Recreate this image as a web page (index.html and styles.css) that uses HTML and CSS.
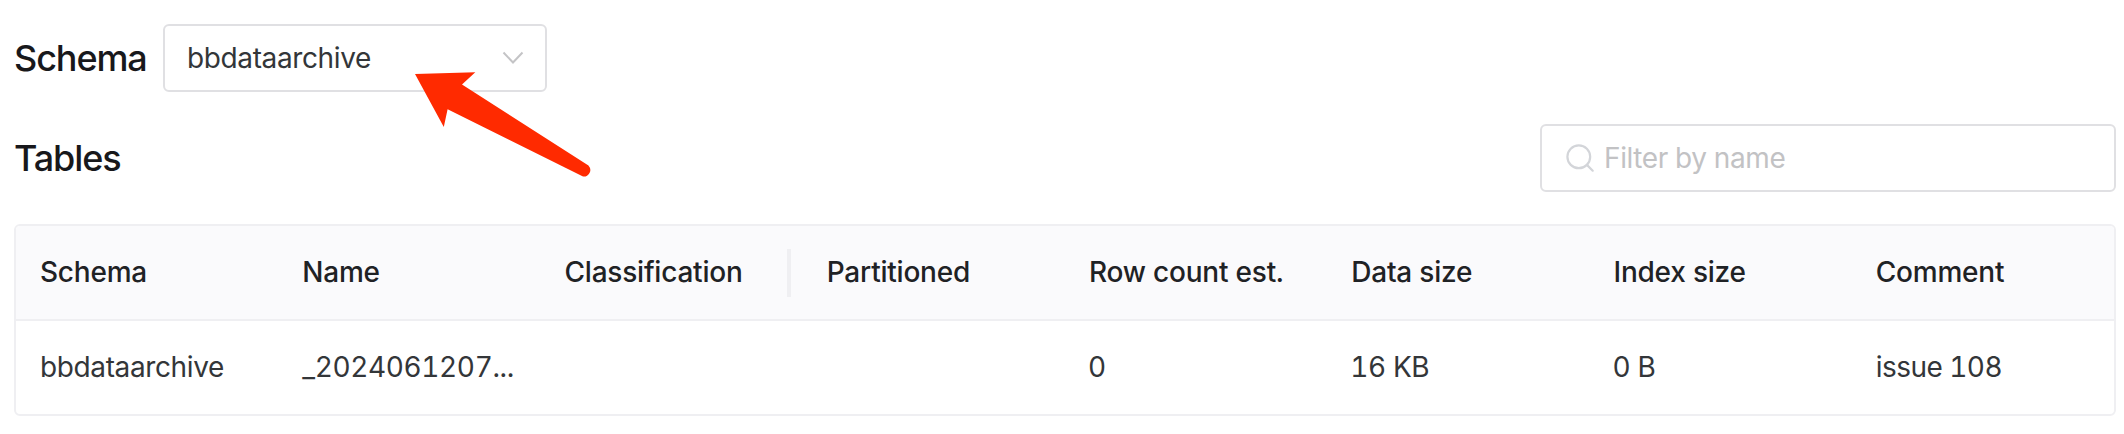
FILE: index.html
```html
<!DOCTYPE html>
<html lang="en">
<head>
<meta charset="utf-8">
<title>Schema tables</title>
<link rel="stylesheet" href="styles.css">
</head>
<body>
<main class="page">
  <div class="schema-bar">
    <h2 class="heading heading-schema">Schema</h2>
    <div class="select">
      <span class="select-value">bbdataarchive</span>
      <svg class="chevron" width="22" height="14" viewBox="0 0 22 14" fill="none"><path d="M1.5 1.5 11 11.5 20.5 1.5" stroke="#c4c4c6" stroke-width="2"/></svg>
    </div>
  </div>
  <div class="tables-bar">
    <h2 class="heading heading-tables">Tables</h2>
    <label class="search">
      <svg class="search-icon" width="28" height="28" viewBox="0 0 28 28" fill="none" stroke="#d3d5d9" stroke-width="2.2" stroke-linecap="round"><circle cx="12.8" cy="12.8" r="11.4"/><path d="m20.9 20.9 5.8 5.8"/></svg>
      <span class="placeholder">Filter by name</span>
    </label>
  </div>
  <section class="table">
    <div class="row head">
      <div class="cell">Schema</div>
      <div class="cell">Name</div>
      <div class="cell cell-resizable">Classification</div>
      <div class="cell">Partitioned</div>
      <div class="cell">Row count est.</div>
      <div class="cell">Data size</div>
      <div class="cell">Index size</div>
      <div class="cell">Comment</div>
    </div>
    <div class="row body">
      <div class="cell">bbdataarchive</div>
      <div class="cell cell-name">_2024061207...</div>
      <div class="cell"></div>
      <div class="cell"></div>
      <div class="cell cell-number">0</div>
      <div class="cell cell-number">16 KB</div>
      <div class="cell cell-number">0 B</div>
      <div class="cell cell-comment">issue 108</div>
    </div>
  </section>
  <svg class="arrow" width="180" height="110" viewBox="412 70 180 110"><path d="M415 74 475.3 72.2 462 84.6 586.5 164.2A6.4 6.4 0 0 1 582.5 176.3L447.6 109.2 443.8 127Z" fill="#ff2a00"/></svg>
</main>
</body>
</html>
```
FILE: styles.css
```css
* { box-sizing: border-box; }
body {
  margin: 0;
  background: #fff;
  color: #333639;
  font-family: Inter, "Liberation Sans", sans-serif;
  font-size: 28px;
  line-height: 44px;
  letter-spacing: -0.38px;
  font-variant-numeric: tabular-nums;
}
.page {
  position: relative;
  height: 434px;
  padding: 24px 8px 0 14px;
}
.schema-bar { display: flex; align-items: center; height: 68px; }
.heading {
  margin: 0;
  color: #18181b;
  font-size: 36px;
  font-weight: 500;
  line-height: 56px;
  letter-spacing: -1.1px;
}
.heading-schema { width: 149px; }
.select {
  display: flex;
  align-items: center;
  justify-content: space-between;
  width: 384px;
  height: 68px;
  padding: 0 21px 0 22px;
  border: 2px solid #e0e0e3;
  border-radius: 6px;
}
.tables-bar {
  display: flex;
  align-items: center;
  justify-content: space-between;
  height: 68px;
  margin-top: 32px;
}
.search {
  display: flex;
  align-items: center;
  gap: 10px;
  width: 576px;
  height: 68px;
  padding: 0 24px;
  border: 2px solid #e0e0e3;
  border-radius: 6px;
}
.placeholder { color: #c2c2c4; }
.table {
  height: 192px;
  margin-top: 32px;
  border: 2px solid #efeff2;
  border-radius: 6px;
  overflow: hidden;
}
.row { display: grid; grid-template-columns: repeat(8, 1fr); }
.cell { padding: 0 24px; white-space: nowrap; }
.head {
  height: 95px;
  padding: 24px 0;
  border-bottom: 2px solid #efeff2;
  background: #fafafc;
  color: #1f2225;
  font-weight: 500;
  letter-spacing: -0.22px;
}
.body { padding-top: 24px; }
.cell-number { padding-left: 23px; letter-spacing: -0.4px; }
.cell-comment { letter-spacing: -0.55px; }
.cell-resizable {
  display: flex;
  align-items: center;
  justify-content: space-between;
  height: 44px;
}
.cell-resizable::after {
  content: "";
  flex: none;
  width: 4px;
  height: 48px;
  margin: 2px -12px 0 0;
  background: #efeff2;
}
.arrow { position: absolute; left: 412px; top: 70px; }
```
